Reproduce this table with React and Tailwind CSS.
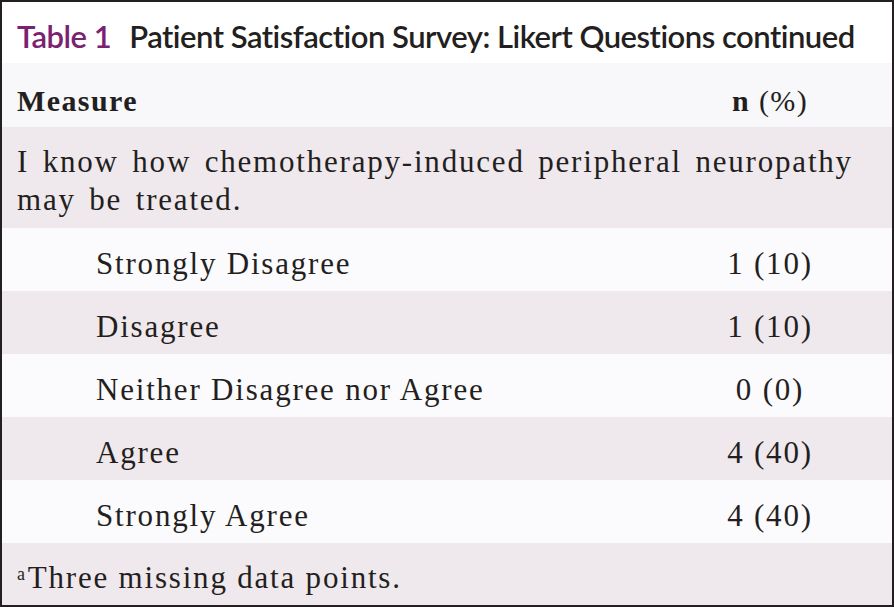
import React from "react";

const serif = { fontFamily: '"Liberation Serif", "DejaVu Serif", serif' };

const rows = [
  { label: "Strongly Disagree", value: "1 (10)", bg: "bg-[#fbfafc]" },
  { label: "Disagree", value: "1 (10)", bg: "bg-[#efe9ed]" },
  { label: "Neither Disagree nor Agree", value: "0 (0)", bg: "bg-[#fbfafc]" },
  { label: "Agree", value: "4 (40)", bg: "bg-[#efe9ed]" },
  { label: "Strongly Agree", value: "4 (40)", bg: "bg-[#fbfafc]" },
];

const App = () => {
  return (
    <div className="w-[894px] h-[607px] border-2 border-[#231f20] bg-white text-[#231f20] flex flex-col">
      {/* Title */}
      <div
        className="h-[61px] flex items-center pl-[15px] pt-[7px] text-[31px] tracking-[-0.5px] font-semibold"
        style={{ fontFamily: 'Lato, "Open Sans", sans-serif' }}
      >
        <span className="text-[#7a2271]">Table 1</span>
        <span className="ml-[18px]">
          Patient Satisfaction Survey: Likert Questions continued
        </span>
      </div>

      {/* Header */}
      <div
        className="h-[64px] flex items-center pt-[10px] bg-[#f8f7f9] text-[30px] tracking-[1.4px]"
        style={serif}
      >
        <div className="flex-1 pl-[15px] font-bold">Measure</div>
        <div className="w-[244px] text-center">
          <span className="font-bold">n</span> (%)
        </div>
      </div>

      {/* Question */}
      <div
        className="h-[101px] bg-[#efe9ed] pl-[15px] pr-[20px] pt-[16px] text-[31px] leading-[38px] tracking-[1.8px] [word-spacing:4px]"
        style={serif}
      >
        I know how chemotherapy-induced peripheral neuropathy may be treated.
      </div>

      {/* Responses */}
      {rows.map((r) => (
        <div
          key={r.label}
          className={`h-[63px] flex items-center pt-[9px] text-[31px] tracking-[1.8px] ${r.bg}`}
          style={serif}
        >
          <div className="flex-1 pl-[94px]">{r.label}</div>
          <div className="w-[244px] text-center">{r.value}</div>
        </div>
      ))}

      {/* Footnote */}
      <div
        className="h-[62px] flex items-center pt-[9px] bg-[#efe9ed] pl-[15px] text-[31px] tracking-[1.8px]"
        style={serif}
      >
        <sup className="text-[18px] -top-[0.25em] mr-[1px]">a</sup>Three missing data points.
      </div>
    </div>
  );
};

export default App;
